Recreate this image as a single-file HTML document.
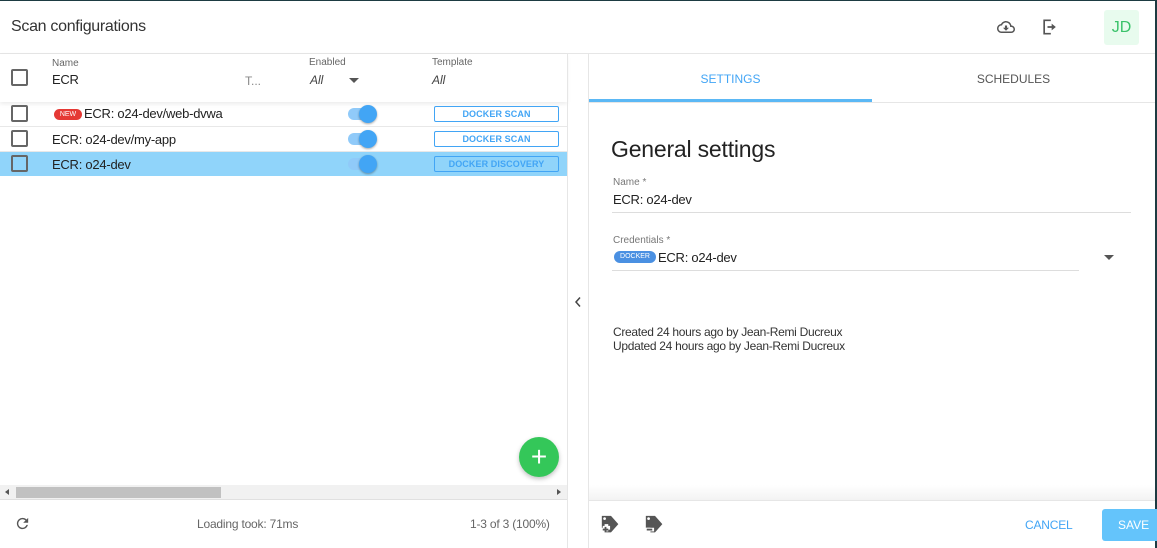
<!DOCTYPE html>
<html><head><style>
*{box-sizing:border-box;margin:0;padding:0}
body{width:1157px;height:548px;overflow:hidden;font-family:"Liberation Sans",Roboto,sans-serif;background:#fff;position:relative;color:#222}
.abs{position:absolute}
.cb{position:absolute;width:17px;height:17px;border:2px solid #666;border-radius:2px}
.tag{position:absolute;left:434px;width:125px;height:16px;border:1px solid #42a5f5;border-radius:2px;color:#42a5f5;font-size:9px;font-weight:bold;text-align:center;line-height:14px;letter-spacing:.1px}
.tog{position:absolute;left:348px;width:30px;height:20px}
.tog .tr{position:absolute;left:0;top:4px;width:28px;height:12px;border-radius:6px;background:#90caf9}
.tog .kn{position:absolute;left:11px;top:1px;width:18px;height:18px;border-radius:50%;background:#42a5f5;box-shadow:0 1px 2px rgba(0,0,0,.35)}
.row{position:absolute;left:0;width:567px;height:25px;border-bottom:1px solid #e8e8e8;font-size:13px}
.t13{font-size:13px;letter-spacing:-.25px}
</style></head><body>
<div class="abs" style="left:0;top:0;width:1157px;height:1px;background:#1d3b42"></div>
<div class="abs" style="right:0;top:0;width:2px;height:548px;background:#1d3b42"></div>
<div class="abs" style="left:11px;top:18px;font-size:16px;color:#333;letter-spacing:-.3px">Scan configurations</div>
<svg class="abs" style="left:995px;top:18px" width="22" height="18" viewBox="0 0 24 24"><path d="M19.35 10.04A7.49 7.49 0 0 0 12 4C9.11 4 6.6 5.64 5.35 8.04A5.994 5.994 0 0 0 0 14c0 3.31 2.69 6 6 6h13c2.76 0 5-2.24 5-5 0-2.640-2.05-4.78-4.65-4.96zM19 18H6c-2.21 0-4-1.790-4-4s1.79-4 4-4h.71C7.37 7.69 9.48 6 12 6c3.04 0 5.5 2.46 5.5 5.5v.5H19c1.66 0 3 1.34 3 3s-1.34 3-3 3zm-5.55-8h-2.9v3H8l4 4 4-4h-2.55z" fill="#555"/></svg>
<svg class="abs" style="left:1040px;top:17px" width="20" height="20" viewBox="0 0 24 24"><path d="M4 3h9v2H6v14h7v2H4zM14 8l5 4-5 4v-3H9v-2h5z" fill="#555"/></svg>
<div class="abs" style="left:1104px;top:10px;width:35px;height:35px;background:#e8fbee;border-radius:3px;color:#3ac26a;font-size:16px;text-align:center;line-height:35px">JD</div>
<div class="abs" style="left:0;top:53px;width:1155px;height:1px;background:#e6e6e6"></div>
<!-- left -->
<div class="abs" style="left:0;top:54px;width:567px;height:48px;background:#fff;box-shadow:0 2px 4px rgba(0,0,0,.08)"></div>
<div class="cb" style="left:11px;top:69px"></div>
<div class="abs" style="left:52px;top:58px;font-size:10px;color:#666">Name</div>
<div class="abs t13" style="left:52px;top:72px">ECR</div>
<div class="abs" style="left:245px;top:74px;font-size:12px;color:#888">T...</div>
<div class="abs" style="left:309px;top:57px;font-size:10px;color:#666">Enabled</div>
<div class="abs" style="left:310px;top:73px;font-size:12px;font-style:italic;color:#444">All</div>
<div class="abs" style="left:349px;top:78px;border-left:5px solid transparent;border-right:5px solid transparent;border-top:5px solid #555"></div>
<div class="abs" style="left:432px;top:57px;font-size:10px;color:#666">Template</div>
<div class="abs" style="left:432px;top:73px;font-size:12px;font-style:italic;color:#444">All</div>
<div class="row" style="top:102px"></div>
<div class="row" style="top:127px"></div>
<div class="row" style="top:152px;background:#90d4fa;border:none;height:24px"></div>
<div class="cb" style="left:11px;top:105px"></div>
<div class="cb" style="left:11px;top:130px"></div>
<div class="cb" style="left:11px;top:155px"></div>
<div class="abs" style="left:54px;top:109px;width:28px;height:11px;border-radius:6px;background:#e53935;color:#fff;font-size:7px;text-align:center;line-height:11px">NEW</div>
<div class="abs t13" style="left:84px;top:106px">ECR: o24-dev/web-dvwa</div>
<div class="abs t13" style="left:52px;top:132px">ECR: o24-dev/my-app</div>
<div class="abs t13" style="left:52px;top:157px">ECR: o24-dev</div>
<div class="tog" style="top:104px"><div class="tr"></div><div class="kn"></div></div>
<div class="tog" style="top:129px"><div class="tr"></div><div class="kn"></div></div>
<div class="tog" style="top:154px"><div class="tr"></div><div class="kn"></div></div>
<div class="tag" style="top:106px">DOCKER SCAN</div>
<div class="tag" style="top:131px">DOCKER SCAN</div>
<div class="tag" style="top:156px">DOCKER DISCOVERY</div>
<div class="abs" style="left:519px;top:437px;width:40px;height:40px;border-radius:50%;background:#34c759;box-shadow:0 2px 5px rgba(0,0,0,.25);color:#fff;font-size:28px;text-align:center;line-height:39px">+</div>
<div class="abs" style="left:0;top:485px;width:567px;height:15px;background:#f1f1f1;border-bottom:1px solid #e0e0e0"></div>
<div class="abs" style="left:16px;top:487px;width:205px;height:11px;background:#c1c1c1"></div>
<div class="abs" style="left:5px;top:489px;border-top:3px solid transparent;border-bottom:3px solid transparent;border-right:4px solid #555"></div>
<div class="abs" style="left:557px;top:489px;border-top:3px solid transparent;border-bottom:3px solid transparent;border-left:4px solid #555"></div>
<svg class="abs" style="left:14px;top:515px" width="17" height="17" viewBox="0 0 24 24"><path d="M17.65 6.35A7.958 7.958 0 0 0 12 4a8 8 0 1 0 7.73 10h-2.08A6 6 0 1 1 12 6c1.66 0 3.14.69 4.22 1.78L13 11h7V4l-2.35 2.35z" fill="#555"/></svg>
<div class="abs" style="left:197px;top:517px;font-size:12px;color:#666;letter-spacing:-.2px">Loading took: 71ms</div>
<div class="abs" style="left:470px;top:517px;font-size:12px;color:#666;letter-spacing:-.2px">1-3 of 3 (100%)</div>
<!-- divider -->
<div class="abs" style="left:567px;top:54px;width:1px;height:494px;background:#e6e6e6"></div>
<div class="abs" style="left:588px;top:54px;width:1px;height:494px;background:#e6e6e6"></div>
<svg class="abs" style="left:573px;top:296px" width="10" height="12" viewBox="0 0 10 12"><path d="M7 1.5L3 6l4 4.5" stroke="#444" stroke-width="1.5" fill="none"/></svg>
<!-- right -->
<div class="abs" style="left:589px;top:72px;width:283px;text-align:center;font-size:12px;color:#42a5f5">SETTINGS</div>
<div class="abs" style="left:872px;top:72px;width:283px;text-align:center;font-size:12px;color:#555">SCHEDULES</div>
<div class="abs" style="left:589px;top:99px;width:283px;height:3px;background:#5bb8f5"></div>
<div class="abs" style="left:589px;top:102px;width:566px;height:1px;background:#e6e6e6"></div>
<div class="abs" style="left:611px;top:136px;font-size:23px;color:#222;letter-spacing:-.2px">General settings</div>
<div class="abs" style="left:613px;top:177px;font-size:10px;color:#777">Name *</div>
<div class="abs t13" style="left:613px;top:192px">ECR: o24-dev</div>
<div class="abs" style="left:612px;top:212px;width:519px;height:1px;background:#ddd"></div>
<div class="abs" style="left:613px;top:235px;font-size:10px;color:#777">Credentials *</div>
<div class="abs" style="left:614px;top:251px;width:42px;height:12px;border-radius:6px;background:#4a90e2;color:#fff;font-size:7px;text-align:center;line-height:12px">DOCKER</div>
<div class="abs t13" style="left:658px;top:250px">ECR: o24-dev</div>
<div class="abs" style="left:1104px;top:255px;border-left:5px solid transparent;border-right:5px solid transparent;border-top:5px solid #555"></div>
<div class="abs" style="left:612px;top:270px;width:467px;height:1px;background:#ddd"></div>
<div class="abs" style="left:613px;top:325px;font-size:12px;color:#333;line-height:14px;letter-spacing:-.3px">Created 24 hours ago by Jean-Remi Ducreux<br>Updated 24 hours ago by Jean-Remi Ducreux</div>
<div class="abs" style="left:589px;top:485px;width:566px;height:15px;background:linear-gradient(#fff,#f3f3f3)"></div>
<div class="abs" style="left:589px;top:500px;width:566px;height:1px;background:#e6e6e6"></div>
<svg class="abs" style="left:600px;top:514px" width="22" height="22" viewBox="0 0 24 24"><path d="M2 2h10l8 9-8 9H7v-5H2z" fill="#555"/><circle cx="5" cy="5" r="1.5" fill="#fff"/><path d="M3 15h8M7 11v8" stroke="#fff" stroke-width="4"/><path d="M3 17h6M6 14v6" stroke="#555" stroke-width="2"/></svg>
<svg class="abs" style="left:644px;top:514px" width="22" height="22" viewBox="0 0 24 24"><path d="M2 2h10l8 9-8 9H7v-5H2z" fill="#555"/><circle cx="5" cy="5" r="1.5" fill="#fff"/><path d="M2 17h9" stroke="#fff" stroke-width="4"/><path d="M3 17h6" stroke="#555" stroke-width="2"/></svg>
<div class="abs" style="left:1025px;top:518px;font-size:12px;color:#42a5f5;letter-spacing:-.2px">CANCEL</div>
<div class="abs" style="left:1102px;top:509px;width:60px;height:32px;border-radius:3px;background:#64c4fb;color:#fff;font-size:12px;line-height:32px;padding-left:16px">SAVE</div>
</body></html>
